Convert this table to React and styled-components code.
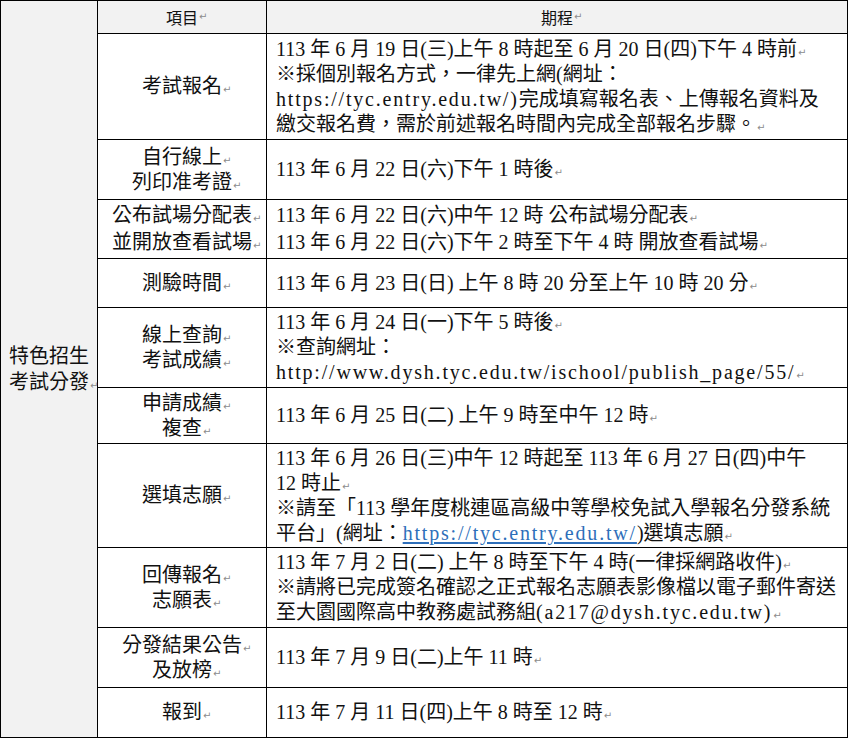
import styled, {createGlobalStyle} from "styled-components";

const GlobalStyle = createGlobalStyle`
  html, body {
    margin: 0;
    padding: 0;
    background: #fff;
  }

  body {
    font-family: "Liberation Serif", "Noto Sans CJK TC", serif;
    color: #111;
  }
`;

// 표처럼 보이게: 검은 배경 + 1px 간격이 선이 된다
const Table = styled.div`
  display: grid;
  width: 848px;
  box-sizing: border-box;
  grid-template-columns: 96px 168px 580px;
  grid-template-rows: 32px 105px 59px 58px 48px 79px 55px 103px 79px 59px 49px;
  gap: 1px;
  padding: 1px;
  background: #000;
`;

const Category = styled.div`
  grid-row: 1 / span 11;
  background: #f2f2f2;
  display: flex;
  flex-direction: column;
  justify-content: center;
  align-items: center;
  font-size: 20px;
  line-height: 26px;
`;

const HeadCell = styled.div`
  background: #f2f2f2;
  display: flex;
  align-items: center;
  justify-content: center;
  font-size: 16px;
`;

const ItemCell = styled.div`
  background: #fff;
  display: flex;
  flex-direction: column;
  justify-content: center;
  align-items: center;
  font-size: 20px;
  line-height: ${props => props.$lh || 25}px;
`;

const PlanCell = styled.div`
  background: #fff;
  display: flex;
  flex-direction: column;
  justify-content: center;
  padding-left: 9px;
  font-size: 20px;
  line-height: ${props => props.$lh || 25}px;
`;

const Line = styled.div`
  white-space: nowrap;
`;

// 워드 문단 기호
const Mark = styled.span`
  display: inline-block;
  width: 0;
  white-space: nowrap;
  font-family: "DejaVu Sans", sans-serif;
  font-size: 10px;
  line-height: 1;
  color: #8c8c8c;

  &::before {
    content: "↵";
    padding-left: 1px;
  }
`;

const Latin = styled.span`
  letter-spacing: 1.8px;
`;

const Link = styled.span`
  letter-spacing: 1.8px;
  color: #2e6fba;
  text-decoration: underline;
  text-underline-offset: 2px;
`;

const rows = [
    {
        item: ['考試報名'],
        plan: (
            <>
                <Line>113 年 6 月 19 日(三)上午 8 時起至 6 月 20 日(四)下午 4 時前<Mark/></Line>
                <Line>※採個別報名方式，一律先上網(網址：</Line>
                <Line><Latin>https://tyc.entry.edu.tw/)</Latin>完成填寫報名表、上傳報名資料及</Line>
                <Line>繳交報名費，需於前述報名時間內完成全部報名步驟。<Mark/></Line>
            </>
        ),
    },
    {
        item: ['自行線上', '列印准考證'],
        plan: <Line>113 年 6 月 22 日(六)下午 1 時後<Mark/></Line>,
    },
    {
        item: ['公布試場分配表', '並開放查看試場'],
        lh: 27,
        plan: (
            <>
                <Line>113 年 6 月 22 日(六)中午 12 時 公布試場分配表<Mark/></Line>
                <Line>113 年 6 月 22 日(六)下午 2 時至下午 4 時 開放查看試場<Mark/></Line>
            </>
        ),
    },
    {
        item: ['測驗時間'],
        plan: <Line>113 年 6 月 23 日(日) 上午 8 時 20 分至上午 10 時 20 分<Mark/></Line>,
    },
    {
        item: ['線上查詢', '考試成績'],
        plan: (
            <>
                <Line>113 年 6 月 24 日(一)下午 5 時後<Mark/></Line>
                <Line>※查詢網址：</Line>
                <Line><Latin>http://www.dysh.tyc.edu.tw/ischool/publish_page/55/</Latin><Mark/></Line>
            </>
        ),
    },
    {
        item: ['申請成績', '複查'],
        plan: <Line>113 年 6 月 25 日(二) 上午 9 時至中午 12 時<Mark/></Line>,
    },
    {
        item: ['選填志願'],
        plan: (
            <>
                <Line>113 年 6 月 26 日(三)中午 12 時起至 113 年 6 月 27 日(四)中午</Line>
                <Line>12 時止<Mark/></Line>
                <Line>※請至「113 學年度桃連區高級中等學校免試入學報名分發系統</Line>
                <Line>平台」(網址：<Link>https://tyc.entry.edu.tw/</Link>)選填志願<Mark/></Line>
            </>
        ),
    },
    {
        item: ['回傳報名', '志願表'],
        plan: (
            <>
                <Line>113 年 7 月 2 日(二) 上午 8 時至下午 4 時(一律採網路收件)<Mark/></Line>
                <Line>※請將已完成簽名確認之正式報名志願表影像檔以電子郵件寄送</Line>
                <Line>至大園國際高中教務處試務組<Latin>(a217@dysh.tyc.edu.tw)</Latin><Mark/></Line>
            </>
        ),
    },
    {
        item: ['分發結果公告', '及放榜'],
        plan: <Line>113 年 7 月 9 日(二)上午 11 時<Mark/></Line>,
    },
    {
        item: ['報到'],
        plan: <Line>113 年 7 月 11 日(四)上午 8 時至 12 時<Mark/></Line>,
    },
];

export default function App() {
    return (
        <>
            <GlobalStyle/>
            <Table>
                <Category>
                    <Line>特色招生</Line>
                    <Line>考試分發<Mark/></Line>
                </Category>
                <HeadCell>項目<Mark/></HeadCell>
                <HeadCell>期程<Mark/></HeadCell>
                {rows.map((row, i) => (
                    <Row key={i} row={row}/>
                ))}
            </Table>
        </>
    );
}

const Row = ({row}) => (
    <>
        <ItemCell $lh={row.lh}>
            {row.item.map((t, j) => (
                <Line key={j}>{t}<Mark/></Line>
            ))}
        </ItemCell>
        <PlanCell $lh={row.lh}>{row.plan}</PlanCell>
    </>
);
